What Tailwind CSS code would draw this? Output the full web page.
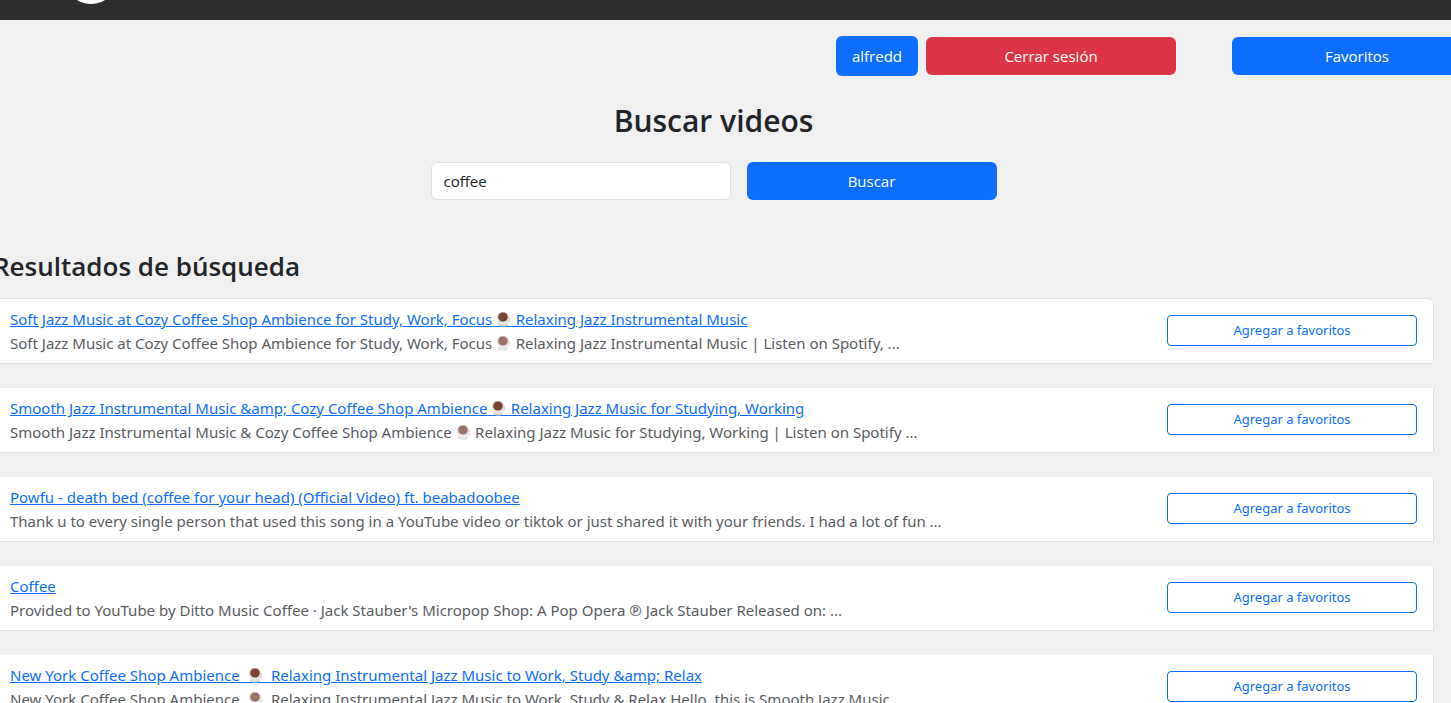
<!DOCTYPE html>
<html lang="es">
<head>
<meta charset="utf-8">
<title>Buscar videos</title>
<script src="https://cdn.jsdelivr.net/npm/@tailwindcss/browser@4"></script>
</head>
<body class="h-screen overflow-hidden bg-[#f0f0f0] font-['Noto_Sans',sans-serif] text-[15px] leading-6 text-[#212529]">
<svg class="hidden" aria-hidden="true">
  <defs>
    <symbol id="cup" viewBox="0 0 14 16">
      <ellipse cx="7" cy="13.5" rx="5" ry="2" fill="#d3d3d3"/>
      <path d="M9.500 5.500h2.500a1.800 1.800 0 0 1 0 5.600h-2z" fill="#d9d9d9"/>
      <path d="M1 5.500C1 11.500 3.200 14.300 7 14.300s6-2.800 6-8.800z" fill="#e4e4e4"/>
      <ellipse cx="7" cy="5.800" rx="5.800" ry="5" fill="#d3d1d1"/>
      <ellipse cx="7" cy="6" rx="4.700" ry="4.500" fill="#7b4232"/>
    </symbol>
  </defs>
</svg>
<header class="flex h-5 items-end overflow-hidden bg-[#2d2d2d] pl-16">
  <svg class="mb-4 size-[54px] shrink-0" viewBox="0 0 54 54" aria-hidden="true"><circle cx="27" cy="27" r="27" fill="#fff"/></svg>
</header>
<main class="-ml-[7px] mr-[17px]">
  <nav class="-mr-12 flex items-center justify-end gap-2 pt-4 font-['Open_Sans',sans-serif] text-white" aria-label="Cuenta">
    <button class="h-10 w-[82px] shrink-0 rounded-md bg-[#0d6efd]">alfredd</button>
    <button class="mr-12 h-[38px] w-[250px] shrink-0 rounded-md bg-[#dc3545]">Cerrar sesión</button>
    <button class="h-[38px] w-[250px] shrink-0 rounded-md bg-[#0d6efd]">Favoritos</button>
  </nav>
  <h1 class="mt-[26px] text-center font-['Open_Sans',sans-serif] text-[30px] leading-[38px] font-semibold"><label for="q">Buscar videos</label></h1>
  <form class="mt-[22px] flex justify-center gap-4 font-['Open_Sans',sans-serif]">
    <input id="q" type="text" value="coffee" class="h-[38px] w-[300px] rounded-md border border-[#dee2e6] bg-white px-3">
    <button type="button" class="h-[38px] w-[250px] rounded-md bg-[#0d6efd] text-white">Buscar</button>
  </form>
  <h2 class="mt-[50px] font-['Open_Sans',sans-serif] text-[26px] leading-8 font-semibold">Resultados de búsqueda</h2>
  <ul class="mt-4 flex flex-col gap-6 whitespace-nowrap">
    <li class="flex items-center justify-between rounded-t-md border border-[#dee2e6] bg-white px-4 py-2">
      <div>
        <a href="#" class="text-[#0d6efd] underline">Soft Jazz Music at Cozy Coffee Shop Ambience for Study, Work, Focus<span class="relative">&nbsp;&nbsp;&nbsp;&nbsp;&nbsp;<svg class="absolute top-0.5 left-1 h-4 w-3.5" role="img" aria-label="café"><use href="#cup"/></svg></span> Relaxing Jazz Instrumental Music</a>
        <p class="text-[#595c5f]">Soft Jazz Music at Cozy Coffee Shop Ambience for Study, Work, Focus<span class="relative">&nbsp;&nbsp;&nbsp;&nbsp;&nbsp;<svg class="absolute top-0.5 left-1 h-4 w-3.5 opacity-75" role="img" aria-label="café"><use href="#cup"/></svg></span> Relaxing Jazz Instrumental Music | Listen on Spotify, ...</p>
      </div>
      <button class="mb-0.5 h-[31px] w-[250px] shrink-0 rounded border border-[#0d6efd] text-[13px] text-[#0d6efd]">Agregar a favoritos</button>
    </li>
    <li class="flex items-center justify-between border border-t-0 border-[#dee2e6] bg-white px-4 py-2">
      <div>
        <a href="#" class="text-[#0d6efd] underline">Smooth Jazz Instrumental Music &amp;amp; Cozy Coffee Shop Ambience<span class="relative">&nbsp;&nbsp;&nbsp;&nbsp;&nbsp;<svg class="absolute top-0.5 left-1 h-4 w-3.5" role="img" aria-label="café"><use href="#cup"/></svg></span> Relaxing Jazz Music for Studying, Working</a>
        <p class="text-[#595c5f]">Smooth Jazz Instrumental Music &amp; Cozy Coffee Shop Ambience<span class="relative">&nbsp;&nbsp;&nbsp;&nbsp;&nbsp;<svg class="absolute top-0.5 left-1 h-4 w-3.5 opacity-75" role="img" aria-label="café"><use href="#cup"/></svg></span> Relaxing Jazz Music for Studying, Working | Listen on Spotify ...</p>
      </div>
      <button class="mb-0.5 h-[31px] w-[250px] shrink-0 rounded border border-[#0d6efd] text-[13px] text-[#0d6efd]">Agregar a favoritos</button>
    </li>
    <li class="flex items-center justify-between border border-t-0 border-[#dee2e6] bg-white px-4 py-2">
      <div>
        <a href="#" class="text-[#0d6efd] underline">Powfu - death bed (coffee for your head) (Official Video) ft. beabadoobee</a>
        <p class="text-[#595c5f]">Thank u to every single person that used this song in a YouTube video or tiktok or just shared it with your friends. I had a lot of fun ...</p>
      </div>
      <button class="mb-0.5 h-[31px] w-[250px] shrink-0 rounded border border-[#0d6efd] text-[13px] text-[#0d6efd]">Agregar a favoritos</button>
    </li>
    <li class="flex items-center justify-between border border-t-0 border-[#dee2e6] bg-white px-4 py-2">
      <div>
        <a href="#" class="text-[#0d6efd] underline">Coffee</a>
        <p class="text-[#595c5f]">Provided to YouTube by Ditto Music Coffee · Jack Stauber's Micropop Shop: A Pop Opera ℗ Jack Stauber Released on: ...</p>
      </div>
      <button class="mb-0.5 h-[31px] w-[250px] shrink-0 rounded border border-[#0d6efd] text-[13px] text-[#0d6efd]">Agregar a favoritos</button>
    </li>
    <li class="flex items-center justify-between border border-t-0 border-[#dee2e6] bg-white px-4 py-2">
      <div>
        <a href="#" class="text-[#0d6efd] underline">New York Coffee Shop Ambience <span class="relative">&nbsp;&nbsp;&nbsp;&nbsp;&nbsp;<svg class="absolute top-0.5 left-1 h-4 w-3.5" role="img" aria-label="café"><use href="#cup"/></svg></span>&nbsp; Relaxing Instrumental Jazz Music to Work, Study &amp;amp; Relax</a>
        <p class="text-[#595c5f]">New York Coffee Shop Ambience <span class="relative">&nbsp;&nbsp;&nbsp;&nbsp;&nbsp;<svg class="absolute top-0.5 left-1 h-4 w-3.5 opacity-75" role="img" aria-label="café"><use href="#cup"/></svg></span>&nbsp; Relaxing Instrumental Jazz Music to Work, Study &amp; Relax Hello, this is Smooth Jazz Music</p>
      </div>
      <button class="mb-0.5 h-[31px] w-[250px] shrink-0 rounded border border-[#0d6efd] text-[13px] text-[#0d6efd]">Agregar a favoritos</button>
    </li>
  </ul>
</main>
</body>
</html>
